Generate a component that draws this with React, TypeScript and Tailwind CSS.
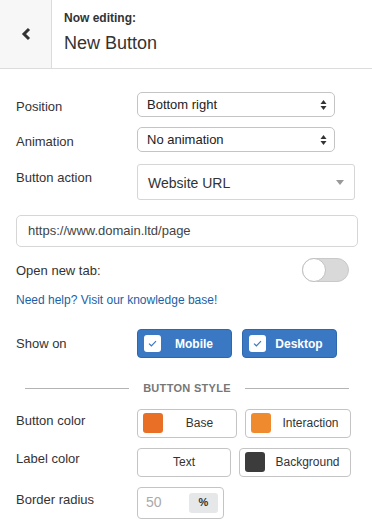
import React from 'react';

function UpDown() {
    return (
        <svg width="7" height="12" viewBox="0 0 7 12" className="text-[#333]">
            <path d="M3.5 1 L6.5 5 L0.5 5 Z" fill="currentColor" />
            <path d="M3.5 11 L6.5 7 L0.5 7 Z" fill="currentColor" />
        </svg>
    );
}

function Check() {
    return (
        <span className="w-[17px] h-[17px] bg-white rounded-[3px] flex items-center justify-center">
            <svg width="9" height="7" viewBox="0 0 9 7">
                <path d="M1 3.6 L3.4 5.8 L8 1.2" fill="none" stroke="#3a78c3" strokeWidth="1.2" />
            </svg>
        </span>
    );
}

function Row({ label, children, className = '', labelClass = '' }: { label: string; children: React.ReactNode; className?: string; labelClass?: string }) {
    return (
        <div className={`grid grid-cols-[121px_1fr] items-center ${className}`}>
            <span className={`text-[13px] leading-[16px] text-[#333] ${labelClass}`}>{label}</span>
            <div className="flex gap-[10px]">{children}</div>
        </div>
    );
}

export default function App() {
    return (
        <div className="w-[372px] h-[528px] bg-white overflow-hidden" style={{ fontFamily: '"Liberation Sans", Arial, sans-serif' }}>
            <div className="flex h-[69px] border-b border-[#dcdcdc]">
                <div className="w-[52px] bg-[#f7f7f7] border-r border-[#dcdcdc] flex items-center justify-center">
                    <svg width="12" height="14" viewBox="0 0 12 14">
                        <path d="M9 2 L4 7 L9 12" fill="none" stroke="#333" strokeWidth="3" />
                    </svg>
                </div>
                <div className="pl-[12px] pt-[9px]">
                    <div className="text-[12px] font-bold text-[#333]">Now editing:</div>
                    <div className="text-[18px] text-[#333] mt-[3px]">New Button</div>
                </div>
            </div>

            <div className="pl-4 pr-[14px]">
                <Row label="Position" className="mt-[23px]" labelClass="translate-y-[2px]">
                    <div className="w-[198px] h-[25px] border border-[#c4c4c4] rounded-[5px] flex items-center justify-between pl-[9px] pr-[7px] text-[13px] text-[#222]">
                        <span>Bottom right</span>
                        <UpDown />
                    </div>
                </Row>
                <Row label="Animation" className="mt-[10px]" labelClass="translate-y-[2px]">
                    <div className="w-[198px] h-[25px] border border-[#c4c4c4] rounded-[5px] flex items-center justify-between pl-[9px] pr-[7px] text-[13px] text-[#222]">
                        <span>No animation</span>
                        <UpDown />
                    </div>
                </Row>
                <Row label="Button action" className="mt-[12px]" labelClass="-translate-y-[4px]">
                    <div className="w-[218px] h-[36px] border border-[#d6d6d6] rounded-[3px] flex items-center justify-between pl-[10px] pr-[10px] text-[14px] text-[#333]">
                        <span className="mt-[2px]">Website URL</span>
                        <svg width="8" height="5" viewBox="0 0 8 5">
                            <path d="M0 0 L8 0 L4 5 Z" fill="#999" />
                        </svg>
                    </div>
                </Row>

                <div className="mt-[15px] h-[32px] border border-[#d6d6d6] rounded-[5px] flex items-center pl-[11px] text-[13px] text-[#444]">
                    https://www.domain.ltd/page
                </div>

                <div className="mt-[11px] flex items-center justify-between pr-[9px]">
                    <span className="text-[13px] text-[#333] mt-[1px]">Open new tab:</span>
                    <div className="w-[47px] h-[24px] rounded-full bg-[#d9d9d9] border border-[#c9c9c9] relative">
                        <span className="absolute -left-px -top-px w-[24px] h-[24px] rounded-full bg-white border border-[#c0c0c0]" />
                    </div>
                </div>

                <div className="mt-[10px] text-[12px] text-[#1b5fa6] leading-[16px]">Need help? Visit our knowledge base!</div>

                <Row label="Show on" className="mt-[21px]">
                    {['Mobile', 'Desktop'].map((t) => (
                        <div key={t} className="w-[95px] h-[29px] bg-[#3a78c3] border border-[#2f67ad] rounded-[4px] flex items-center pl-[6px]">
                            <Check />
                            <span className="flex-1 text-center text-[12px] font-bold text-white pr-[4px]">{t}</span>
                        </div>
                    ))}
                </Row>

                <div className="mt-[22px] flex items-center px-[9px]">
                    <div className="w-[104px] h-px bg-[#b3b3b3]" />
                    <span className="flex-1 text-center text-[11px] font-bold text-[#777] tracking-[0.3px]">BUTTON STYLE</span>
                    <div className="w-[104px] h-px bg-[#b3b3b3]" />
                </div>

                <div className="mt-[12px]">
                    <Row label="Button color" labelClass="-translate-y-[2px]">
                        <div className="flex gap-[8px]">
                            <div className="w-[100px] h-[29px] border border-[#c4c4c4] rounded-[4px] flex items-center pl-[5px]">
                                <span className="w-[20px] h-[20px] rounded-[3px] bg-[#e86f25]" />
                                <span className="flex-1 text-center text-[12px] text-[#333]">Base</span>
                            </div>
                            <div className="w-[106px] h-[29px] border border-[#c4c4c4] rounded-[4px] flex items-center pl-[5px]">
                                <span className="w-[20px] h-[20px] rounded-[3px] bg-[#f08a2e]" />
                                <span className="flex-1 text-center text-[12px] text-[#333]">Interaction</span>
                            </div>
                        </div>
                    </Row>
                    <Row label="Label color" className="mt-[10px]" labelClass="-translate-y-[3px]">
                        <div className="flex gap-[8px]">
                            <div className="w-[94px] h-[29px] border border-[#c4c4c4] rounded-[4px] flex items-center justify-center text-[12px] text-[#333]">
                                Text
                            </div>
                            <div className="w-[112px] h-[29px] border border-[#c4c4c4] rounded-[4px] flex items-center pl-[5px]">
                                <span className="w-[20px] h-[20px] rounded-[3px] bg-[#3c3c3c]" />
                                <span className="flex-1 text-center text-[12px] text-[#333]">Background</span>
                            </div>
                        </div>
                    </Row>
                    <Row label="Border radius" className="mt-[10px]" labelClass="-translate-y-[3px]">
                        <div className="w-[87px] h-[32px] border border-[#c4c4c4] rounded-[4px] flex items-center pl-[8px] pr-[5px] justify-between">
                            <span className="text-[14px] text-[#aaa]">50</span>
                            <span className="w-[29px] h-[20px] rounded-[3px] bg-[#e6e7e9] flex items-center justify-center text-[11px] font-bold text-[#333]">%</span>
                        </div>
                    </Row>
                </div>
            </div>
        </div>
    );
}
